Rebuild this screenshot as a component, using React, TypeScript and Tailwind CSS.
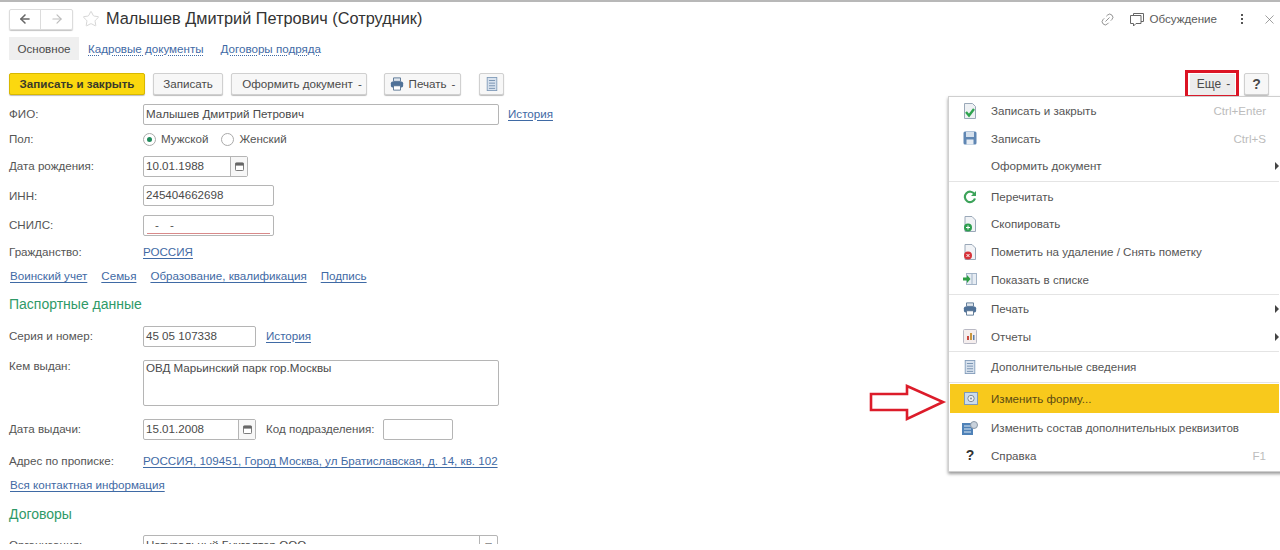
import type { ReactNode } from 'react'
import { ArrowLeft, ArrowRight, Link2, Star, X } from 'lucide-react'

const LINK = 'text-[#3f6aa5] underline underline-offset-2 decoration-[#3f6aa5]'
const TAB_LINK = 'text-[#3f6aa5] underline underline-offset-2 decoration-dotted decoration-[#3f6aa5]'

function PrintIcon({ size = 14 }: { size?: number }) {
  return (
    <svg width={size} height={size} viewBox="0 0 16 16">
      <path d="M4 1h8v4H4z" fill="#dfe6ee" stroke="#54708f" />
      <rect x="1" y="5" width="14" height="7" rx="2" fill="#4f7198" />
      <path d="M4 10h8v5H4z" fill="#fff" stroke="#54708f" />
    </svg>
  )
}

function ListIcon({ size = 14 }: { size?: number }) {
  return (
    <svg width={size} height={size} viewBox="0 0 14 16">
      <rect x="1.5" y="0.5" width="11" height="15" fill="#d8e2ee" stroke="#7f9ab8" />
      <path d="M3.5 4h7M3.5 7h7M3.5 10h7M3.5 13h7" stroke="#6f8cab" />
    </svg>
  )
}

function CalendarIcon() {
  return (
    <svg width="9" height="9" viewBox="0 0 10 10">
      <rect x="0.5" y="1" width="9" height="8.5" rx="1" fill="#fff" stroke="#666" />
      <rect x="0.5" y="1" width="9" height="3" fill="#666" />
    </svg>
  )
}

function Doc({ color, children }: { color: string; children?: ReactNode }) {
  return (
    <svg width="14" height="16" viewBox="0 0 14 16">
      <path d="M2 .5h7l3.5 3.5v11.5H2z" fill="#f1f3f6" stroke="#9aa8b8" />
      <circle cx="5" cy="11.5" r="4" fill={color} />
      {children}
    </svg>
  )
}

const MENU_ICONS: Record<string, ReactNode> = {
  save_close: (
    <svg width="14" height="16" viewBox="0 0 14 16">
      <path d="M1.5.5h8l3 3v12h-11z" fill="#eef1f4" stroke="#9aa8b8" />
      <path d="M3 9l3 3.5L11 6" fill="none" stroke="#2fa44f" strokeWidth="2.4" />
    </svg>
  ),
  save: (
    <svg width="14" height="14" viewBox="0 0 14 14">
      <rect width="13" height="13" x="0.5" y="0.5" rx="1.5" fill="#5f86b3" />
      <rect x="3" y="1" width="8" height="5" fill="#d5e0ec" />
      <rect x="3.5" y="8.5" width="7" height="5" fill="#e8edf3" />
    </svg>
  ),
  reload: (
    <svg width="14" height="14" viewBox="0 0 14 14" fill="none">
      <path d="M11.5 4.2A5.2 5.2 0 1 0 12 8.5" stroke="#3da35a" strokeWidth="2.2" />
      <path d="M13 1v5H8z" fill="#3da35a" />
    </svg>
  ),
  copy: (
    <Doc color="#2e9e4f">
      <path d="M3 11.5h4M5 9.5v4" stroke="#fff" />
    </Doc>
  ),
  remove: (
    <Doc color="#d6333a">
      <path d="M3.5 10l3 3M6.5 10l-3 3" stroke="#fff" />
    </Doc>
  ),
  show: (
    <svg width="14" height="12" viewBox="0 0 14 12">
      <rect x="3.5" y="0.5" width="10" height="11" fill="#e6ecf3" stroke="#a3b4c7" />
      <path d="M9 1v10" stroke="#a3b4c7" />
      <path d="M0 4.5h4V2l3.5 4L4 10V7.5H0z" fill="#2f9e44" />
    </svg>
  ),
  print: <PrintIcon />,
  reports: (
    <svg width="14" height="15" viewBox="0 0 14 15">
      <rect x="0.5" y="0.5" width="13" height="14" rx="1" fill="#f5eeee" stroke="#b9b9c4" />
      <path d="M4 7h2v4H4z" fill="#c9473f" />
      <path d="M7 4h2v7H7z" fill="#c9973f" />
      <path d="M10 6h1.5v5H10z" fill="#5b7fa8" />
    </svg>
  ),
  list: <ListIcon />,
  form: (
    <svg width="14" height="13" viewBox="0 0 14 13">
      <rect x="0.5" y="0.5" width="13" height="12" fill="#cbdcec" stroke="#7f9ab8" />
      <circle cx="7" cy="6.5" r="3.2" fill="#eef1f4" stroke="#7e8b99" />
      <circle cx="7" cy="6.5" r="1" fill="#7e8b99" />
    </svg>
  ),
  fields: (
    <svg width="16" height="14" viewBox="0 0 16 14">
      <rect x="0" y="2" width="11" height="12" fill="#4f82b8" />
      <path d="M2 5h7M2 8h7M2 11h7" stroke="#dce8f3" />
      <circle cx="12" cy="4" r="3.5" fill="#c9d2dc" stroke="#8b98a6" />
    </svg>
  ),
}

type MenuEntry =
  | { sep: string }
  | { sep?: undefined; label: string; icon?: string; hint?: string; sub?: boolean; active?: boolean; mt?: boolean }

const MENU: MenuEntry[] = [
  { label: 'Записать и закрыть', icon: 'save_close', hint: 'Ctrl+Enter' },
  { label: 'Записать', icon: 'save', hint: 'Ctrl+S' },
  { label: 'Оформить документ', sub: true },
  { sep: 'h-[3px]' },
  { label: 'Перечитать', icon: 'reload' },
  { label: 'Скопировать', icon: 'copy' },
  { label: 'Пометить на удаление / Снять пометку', icon: 'remove' },
  { label: 'Показать в списке', icon: 'show' },
  { sep: 'h-[2px]' },
  { label: 'Печать', icon: 'print', sub: true },
  { label: 'Отчеты', icon: 'reports', sub: true },
  { sep: 'h-[3px]' },
  { label: 'Дополнительные сведения', icon: 'list' },
  { sep: 'h-[3px]' },
  { label: 'Изменить форму...', icon: 'form', active: true },
  { label: 'Изменить состав дополнительных реквизитов', icon: 'fields', mt: true },
  { label: 'Справка', icon: 'help', hint: 'F1' },
]

function ToolButton({ children, className = '' }: { children: ReactNode; className?: string }) {
  return (
    <div
      className={`flex h-[22px] items-center justify-center rounded-[2px] border border-[#d0d0d0] bg-[#f7f7f7] pb-[1px] text-[#4a4a4a] shadow-[0_1px_1px_#bdbdbd] ${className}`}
    >
      {children}
    </div>
  )
}

function Field({ label, children, className = '', up }: { label: string; children: ReactNode; className?: string; up?: boolean }) {
  return (
    <div className={`flex items-center ${className}`}>
      <div className={`w-[143px] shrink-0 pl-[9px] text-[#555] ${up ? 'pb-[2px]' : ''}`}>{label}</div>
      {children}
    </div>
  )
}

function Input({ value, className = '' }: { value?: string; className?: string }) {
  return (
    <div className={`flex h-[21px] items-center rounded-[2px] border border-[#b5b5b5] bg-white pb-[2px] pl-[2px] text-[#4a4a4a] ${className}`}>
      {value}
    </div>
  )
}

function DateInput({ value, className }: { value: string; className: string }) {
  return (
    <div className={`flex h-[21px] rounded-[2px] border border-[#b5b5b5] text-[#4a4a4a] ${className}`}>
      <div className="flex flex-1 items-center pb-[2px] pl-[2px]">{value}</div>
      <div className="flex w-[17px] items-center justify-center border-l border-[#b5b5b5] bg-[#f7f7f7]">
        <CalendarIcon />
      </div>
    </div>
  )
}

export default function App() {
  return (
    <div className="relative h-[550px] w-[1280px] overflow-hidden bg-white font-['Liberation_Sans',Arial,sans-serif] text-[11.6px] leading-none">
      <div className="h-[544px] overflow-hidden border-t-2 border-[#b8b8b8]">
        {/* title row */}
        <div className="mt-[6px] flex h-[22px] items-center pl-[9px] pr-[3px]">
          <div className="flex h-[21px] w-[64px] rounded-[2px] border border-[#dcdcdc] shadow-[0_1px_1px_#c4c4c4]">
            <div className="flex w-[31px] items-center justify-center border-r border-[#dcdcdc]">
              <ArrowLeft size={14} strokeWidth={2.6} className="text-[#666]" />
            </div>
            <div className="flex flex-1 items-center justify-center">
              <ArrowRight size={14} strokeWidth={2} className="text-[#bdbdbd]" />
            </div>
          </div>
          <Star size={18} strokeWidth={1} className="ml-[9px] text-[#c8c8c8]" />
          <div className="ml-[6px] pb-[1px] text-[16.3px] text-[#333]">Малышев Дмитрий Петрович (Сотрудник)</div>
          <div className="ml-auto flex items-center text-[#5a5a5a]">
            <Link2 size={15} strokeWidth={1.2} className="-rotate-45 text-[#777]" />
            <svg width="16" height="15" viewBox="0 0 16 15" fill="none" className="ml-[14px]" stroke="#666">
              <path d="M4.5 3V1.5h10v8H12" />
              <path d="M1.5 3.5h10.5v8H7L4.5 14v-2.5h-3z" fill="#fff" />
            </svg>
            <span className="ml-[4px]">Обсуждение</span>
            <div className="ml-[24px] flex w-[3px] flex-col gap-[2px]">
              <i className="size-[2px] bg-[#555]" />
              <i className="size-[2px] bg-[#555]" />
              <i className="size-[2px] bg-[#555]" />
            </div>
            <X size={15} strokeWidth={1} className="ml-[18px] text-[#666]" />
          </div>
        </div>

        {/* tabs */}
        <div className="mt-[7px] flex h-[23px] items-center pl-[9px]">
          <div className="flex h-full w-[70px] items-center justify-center bg-[#efefef] text-[#4a4a4a]">Основное</div>
          <span className={`ml-[9px] ${TAB_LINK}`}>Кадровые документы</span>
          <span className={`ml-[17px] ${TAB_LINK}`}>Договоры подряда</span>
        </div>

        {/* command bar */}
        <div className="mt-[13px] flex h-[22px] items-center pl-[9px] pr-[11px]">
          <div className="flex h-[22px] w-[136px] items-center justify-center rounded-[2px] border border-[#d8b800] bg-[#fbd80f] pb-[1px] font-bold text-[#3a3a2a] shadow-[0_1px_1px_#bdbdbd]">
            Записать и закрыть
          </div>
          <ToolButton className="ml-[8px] w-[70px]">Записать</ToolButton>
          <ToolButton className="ml-[8px] w-[136px] pl-[6px]">
            <span>Оформить документ</span>
            <span className="ml-[5px]">-</span>
          </ToolButton>
          <ToolButton className="ml-[17px] w-[77px] gap-[5px]">
            <PrintIcon />
            <span>Печать</span>
            <span>-</span>
          </ToolButton>
          <ToolButton className="ml-[18px] w-[25px]">
            <ListIcon />
          </ToolButton>
          <div className="ml-auto flex h-[28px] w-[54px] items-center justify-center border-[3px] border-[#dc1424]">
            <div className="flex h-[21px] w-[45px] items-center justify-center gap-[5px] bg-[#ececec] pb-[1px] pl-[3px] text-[12px] text-[#4a4a4a]">
              <span>Еще</span>
              <span>-</span>
            </div>
          </div>
          <ToolButton className="ml-[5px] w-[25px] text-[14px] font-bold">?</ToolButton>
        </div>

        {/* form */}
        <Field up label="ФИО:" className="mt-[9px] h-[21px]">
          <Input value="Малышев Дмитрий Петрович" className="w-[356px]" />
          <span className={`ml-[9px] pb-[2px] ${LINK}`}>История</span>
        </Field>
        <Field label="Пол:" className="mt-[4px] h-[20px]">
          <div className="flex items-center text-[#555]">
            <span className="flex size-[13px] items-center justify-center rounded-full border border-[#aaa]">
              <i className="size-[5px] rounded-full bg-[#1f8a5b]" />
            </span>
            <span className="ml-[5px]">Мужской</span>
            <span className="ml-[13px] size-[13px] rounded-full border border-[#aaa]" />
            <span className="ml-[5px]">Женский</span>
          </div>
        </Field>
        <Field up label="Дата рождения:" className="mt-[7px] h-[21px]">
          <DateInput value="10.01.1988" className="w-[105px]" />
        </Field>
        <Field label="ИНН:" className="mt-[8px] h-[21px]">
          <Input value="245404662698" className="w-[131px]" />
        </Field>
        <Field up label="СНИЛС:" className="mt-[9px] h-[21px]">
          <div className="relative flex h-[21px] w-[131px] rounded-[2px] border border-[#b5b5b5] pl-[11px] pt-[3px] text-[#555]">
            <span>-</span>
            <span className="ml-[11px]">-</span>
            <i className="absolute bottom-[1px] left-[3px] right-[3px] h-px bg-[#d98a8a]" />
          </div>
        </Field>
        <Field label="Гражданство:" className="mt-[6px] h-[20px]">
          <span className={LINK}>РОССИЯ</span>
        </Field>
        <div className="mt-[4px] flex h-[20px] items-center gap-[14px] pl-[10px]">
          <span className={LINK}>Воинский учет</span>
          <span className={LINK}>Семья</span>
          <span className={LINK}>Образование, квалификация</span>
          <span className={LINK}>Подпись</span>
        </div>
        <div className="mt-[8px] flex h-[20px] items-center pl-[9px] text-[14px] text-[#2f9a68]">Паспортные данные</div>
        <Field up label="Серия и номер:" className="mt-[12px] h-[21px]">
          <Input value="45 05 107338" className="w-[113px]" />
          <span className={`ml-[10px] pb-[2px] ${LINK}`}>История</span>
        </Field>
        <Field label="Кем выдан:" className="mt-[13px] h-[46px] !items-start">
          <div className="h-[46px] w-[356px] rounded-[2px] border border-[#b5b5b5] pl-[2px] pt-[1px] text-[#4a4a4a]">
            ОВД Марьинский парк гор.Москвы
          </div>
        </Field>
        <Field up label="Дата выдачи:" className="mt-[13px] h-[21px]">
          <DateInput value="15.01.2008" className="w-[113px]" />
          <span className="ml-[10px] pb-[2px] text-[#555]">Код подразделения:</span>
          <Input className="ml-[9px] w-[70px]" />
        </Field>
        <Field label="Адрес по прописке:" className="mt-[11px] h-[20px]">
          <span className={LINK}>РОССИЯ, 109451, Город Москва, ул Братиславская, д. 14, кв. 102</span>
        </Field>
        <div className="mt-[4px] flex h-[20px] items-center pl-[10px]">
          <span className={LINK}>Вся контактная информация</span>
        </div>
        <div className="mt-[9px] flex h-[20px] items-center pl-[9px] text-[14px] text-[#2f9a68]">Договоры</div>
        <Field up label="Организация:" className="mt-[11px] h-[21px]">
          <div className="flex h-[21px] w-[355px] rounded-[2px] border border-[#b5b5b5] text-[#4a4a4a]">
            <div className="flex flex-1 items-center pb-[2px] pl-[2px]">Натуральный Бухгалтер ООО</div>
            <div className="flex w-[18px] items-center justify-center border-l border-[#b5b5b5] text-[10px]">□</div>
          </div>
        </Field>
      </div>

      {/* dropdown */}
      <div className="absolute left-[948px] top-[96px] h-[376px] w-[340px] border border-[#cfcfcf] bg-white pr-[8px] shadow-[0_2px_3px_#9a9a9a]">
        {MENU.map((m, i) =>
          m.sep ? (
            <div key={i} className={`flex items-center ${m.sep}`}>
              <i className="h-px w-full bg-[#e4e4e4]" />
            </div>
          ) : (
            <div
              key={i}
              className={`flex items-center ${
                m.active ? 'ml-[1px] h-[29px] bg-[#f8c91c] text-[#5a4a14]' : 'h-[27.6px] text-[#555]'
              } ${m.mt ? 'mt-[1px]' : ''}`}
            >
              <div className={`flex shrink-0 justify-center text-[14px] font-bold text-[#333] ${m.active ? 'w-[41px]' : 'w-[42px]'}`}>
                {m.icon === 'help' ? '?' : m.icon ? MENU_ICONS[m.icon] : null}
              </div>
              <span>{m.label}</span>
              {m.hint && <span className="ml-auto pr-[13px] text-[#bcbcbc]">{m.hint}</span>}
              {m.sub && (
                <span className="ml-auto h-0 w-0 border-y-[4px] border-l-[4px] border-y-transparent border-l-[#444]" />
              )}
            </div>
          ),
        )}
      </div>

      {/* red arrow */}
      <svg width="80" height="40" viewBox="0 0 80 40" className="absolute left-[868px] top-[383px]" fill="none">
        <path d="M3 11h36V3l36 16-36 17v-9H3z" stroke="#dc1c2a" strokeWidth="2.6" fill="#fff" />
      </svg>
    </div>
  )
}
